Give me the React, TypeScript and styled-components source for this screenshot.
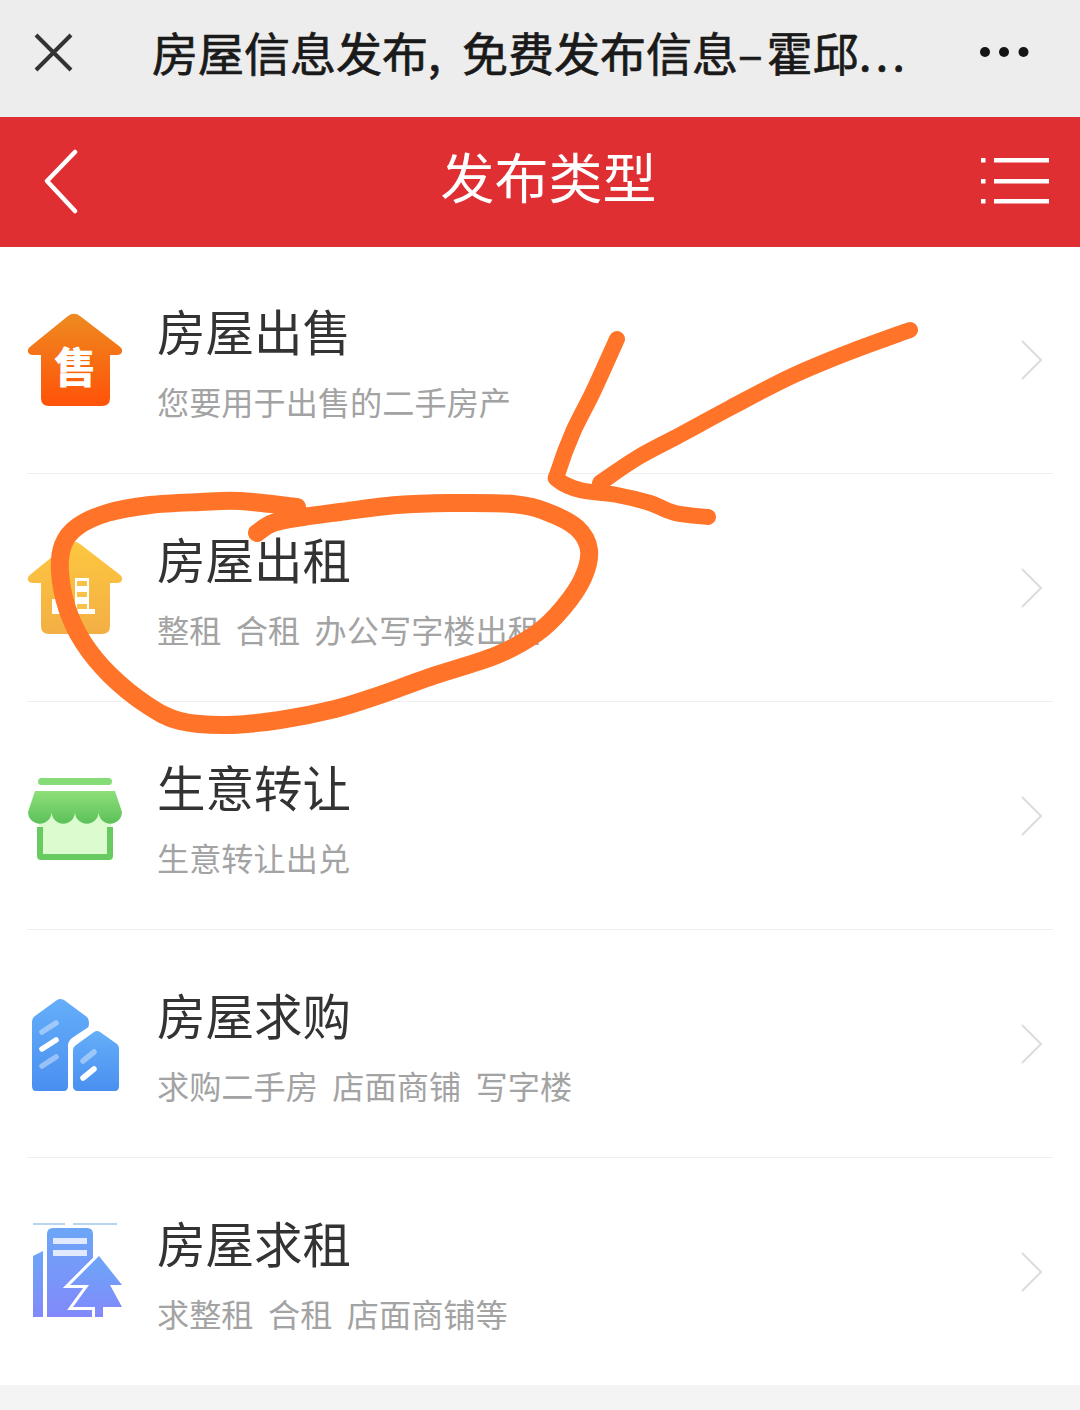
import React from 'react';
import styled, { createGlobalStyle } from 'styled-components';

const GlobalStyle = createGlobalStyle`
  html, body {
    margin: 0;
    padding: 0;
    background: #f4f4f4;
  }
  * {
    box-sizing: border-box;
  }
`;

const cjk = `"Noto Sans CJK SC", "Noto Sans", sans-serif`;

const Page = styled.div`
  position: relative;
  width: 1080px;
  height: 1410px;
  overflow: hidden;
  font-family: ${cjk};
`;

const BrowserBar = styled.header`
  display: flex;
  align-items: center;
  height: 117px;
  padding: 0 50px 0 33px;
  background: #ededed;
`;

const PageName = styled.h1`
  flex: 1;
  margin: 0 0 0 77px;
  padding-bottom: 15px;
  font-size: 46px;
  font-weight: 400;
  -webkit-text-stroke: 0.7px #1a1a1a;
  line-height: 60px;
  color: #1a1a1a;
  white-space: nowrap;
`;

const Spaced = styled.span<{ $gap: number }>`
  letter-spacing: ${(p) => p.$gap}px;
`;

const RedBar = styled.div`
  display: flex;
  align-items: center;
  justify-content: space-between;
  height: 130px;
  padding: 0 31px 0 44px;
  background: #df2f33;
`;

const BarTitle = styled.h2`
  margin: 0 0 12px 36px;
  font-size: 54px;
  font-weight: 400;
  line-height: 70px;
  color: #fff;
`;

const List = styled.ul`
  margin: 0;
  padding: 0 27px;
  list-style: none;
  background: #fff;
`;

const Row = styled.li`
  display: flex;
  align-items: center;
  height: 228px;
  border-bottom: 1px solid #efefef;

  &:first-child {
    height: 227px;
  }

  &:last-child {
    height: 227px;
    border-bottom: 0;
  }
`;

const IconBox = styled.div`
  position: relative;
  flex: none;
  width: 96px;
  height: 96px;
  margin: -2px 34px 0 0;

  svg {
    overflow: visible;
  }
`;

const IconMark = styled.span`
  position: absolute;
  left: 0;
  right: 0;
  top: 30px;
  font-size: 42px;
  font-weight: 900;
  line-height: 48px;
  text-align: center;
  color: #fff;
`;

const RowText = styled.div`
  flex: 1;
`;

const RowTitle = styled.div`
  font-size: 48.5px;
  line-height: 64px;
  color: #333;
`;

const RowSub = styled.div`
  margin-top: 18px;
  font-size: 32.2px;
  line-height: 42px;
  white-space: pre;
  color: #a3a3a3;
`;

const Chevron = styled.svg`
  flex: none;
  width: 24px;
  height: 42px;
  margin-right: 9px;
`;

const Scribble = styled.svg`
  position: absolute;
  left: 0;
  top: 0;
  pointer-events: none;
`;

const CloseIcon = () => (
  <svg width="42" height="42" viewBox="0 0 42 42" style={{ flex: 'none', marginBottom: 12 }}>
    <path d="M3 3 L38 38 M38 3 L3 38" stroke="#333" strokeWidth="4" fill="none" />
  </svg>
);

const MoreIcon = () => (
  <svg width="50" height="12" viewBox="0 0 50 12" style={{ flex: 'none', marginBottom: 13 }}>
    <circle cx="5" cy="6" r="5" fill="#151515" />
    <circle cx="24" cy="6" r="5" fill="#151515" />
    <circle cx="43.5" cy="6" r="5" fill="#151515" />
  </svg>
);

const BackIcon = () => (
  <svg width="36" height="66" viewBox="0 0 36 66" style={{ marginBottom: 1 }}>
    <path d="M31 3 L3 32 L31 62" stroke="#fff" strokeWidth="4.5" strokeLinecap="round" strokeLinejoin="round" fill="none" />
  </svg>
);

const MenuIcon = () => (
  <svg width="68" height="46" viewBox="0 0 68 46" style={{ marginBottom: 3 }}>
    <g fill="#fff">
      <rect x="0" y="0" width="4.5" height="4.5" />
      <rect x="13" y="0" width="55" height="4.5" />
      <rect x="0" y="21" width="4.5" height="4.5" />
      <rect x="13" y="21" width="55" height="4.5" />
      <rect x="0" y="41" width="4.5" height="4.5" />
      <rect x="13" y="41" width="55" height="4.5" />
    </g>
  </svg>
);

const housePath =
  'M41 5 Q47 0.5 53 5 L92 35 Q96 38 95 41 Q94 44 90 44 L83 44 L83 87 Q83 95 75 95 L22 95 Q14 95 14 87 L14 44 L6 44 Q2 44 1 41 Q0 38 4 35 Z';

const HouseIcon = ({ id, from, to, children }: { id: string; from: string; to: string; children?: React.ReactNode }) => (
  <>
    <svg width="96" height="96" viewBox="0 0 96 96">
      <defs>
        <linearGradient id={id} x1="0" y1="0" x2="0" y2="1">
          <stop offset="0" stopColor={from} />
          <stop offset="1" stopColor={to} />
        </linearGradient>
      </defs>
      <path d={housePath} fill={`url(#${id})`} />
      {id === 'rent' && (
        <g fill="#fff">
          <path d="M48 39 H62 V70 H68 V75 H48 Z" />
          <rect x="25" y="60" width="14" height="15" />
          <rect x="50" y="42" width="10" height="5" fill="#f9c146" />
          <rect x="50" y="53" width="10" height="5" fill="#f9c146" />
          <rect x="50" y="65" width="10" height="5" fill="#f9c146" />
        </g>
      )}
    </svg>
    {children}
  </>
);

const ShopIcon = () => (
  <svg width="96" height="96" viewBox="0 0 96 96">
    <defs>
      <linearGradient id="awning" x1="0" y1="0" x2="0" y2="1">
        <stop offset="0" stopColor="#8ee07a" />
        <stop offset="1" stopColor="#5cc05a" />
      </linearGradient>
    </defs>
    <rect x="11" y="11" width="74" height="7" rx="3.5" fill="#86dc77" />
    <path d="M12 40 H84 V90 H12 Z" fill="#dcfccf" />
    <path d="M10 60 V89 Q10 93 14 93 H82 Q86 93 86 89 V60 H80 V87 H16 V60 Z" fill="#67cb61" />
    <path
      d="M8 24 H88 L95 45 A11.7 11.7 0 0 1 71.6 45 A11.7 11.7 0 0 1 48 45 A11.7 11.7 0 0 1 24.6 45 A11.7 11.7 0 0 1 1 45 Z"
      fill="url(#awning)"
    />
  </svg>
);

const TowerIcon = () => (
  <svg width="96" height="96" viewBox="0 0 96 96">
    <defs>
      <linearGradient id="tower" x1="0" y1="0" x2="0" y2="1">
        <stop offset="0" stopColor="#64aef9" />
        <stop offset="1" stopColor="#4a8ff0" />
      </linearGradient>
    </defs>
    <g transform="translate(0 3)">
      <path
        d="M30 2 Q33 0 37 2 L60 19 Q62 21 62 26 Q62 29 60 30 L45 40 Q41 43 41 48 V88 Q41 93 37 93 H9 Q5 93 5 88 V23 Q5 20 8 18 Z"
        fill="url(#tower)"
      />
      <path
        d="M67 34 Q70 32 73 34 L90 46 Q92 48 92 50 V88 Q92 93 88 93 H51 Q46 93 46 88 V53 Q46 49 49 47 Z"
        fill="url(#tower)"
      />
    </g>
    <g strokeLinecap="round" strokeWidth="5.5" stroke="#fff">
      <path d="M15 37 L29 28" opacity="0.4" />
      <path d="M15 54 L29 45" />
      <path d="M15 71 L29 62" opacity="0.4" />
      <path d="M56 66 L67 57" opacity="0.4" />
      <path d="M56 83 L67 74" />
    </g>
  </svg>
);

const ParkIcon = () => (
  <svg width="96" height="96" viewBox="0 0 96 96">
    <defs>
      <linearGradient id="park" x1="0" y1="0" x2="0" y2="1">
        <stop offset="0" stopColor="#6ca6f7" />
        <stop offset="1" stopColor="#8289fb" />
      </linearGradient>
    </defs>
    <path d="M6 1 H38 M46 1 H90" stroke="#a3c6e8" strokeWidth="1.5" />
    <path d="M6 33 L16 28 V94 H6 Z" fill="url(#park)" />
    <path d="M20 11 Q20 5 26 5 H60 Q66 5 66 11 V94 H20 Z" fill="url(#park)" />
    <rect x="26" y="15" width="34" height="6" fill="#e0e9fd" />
    <rect x="26" y="27" width="34" height="6" fill="#e0e9fd" />
    <path
      d="M72 33 L95 62 H83 L95 84 H76 V94 H68 V84 H46 L62 62 H43 Z"
      fill="url(#park)"
      stroke="#fff"
      strokeWidth="6"
      strokeLinejoin="miter"
      paintOrder="stroke"
    />
  </svg>
);

// smooth curve through the traced points of a hand drawn stroke
const smooth = (pts: number[][]) => {
  let d = `M${pts[0][0]} ${pts[0][1]}`;
  for (let i = 0; i < pts.length - 1; i++) {
    const p0 = pts[i - 1] || pts[i];
    const p1 = pts[i];
    const p2 = pts[i + 1];
    const p3 = pts[i + 2] || p2;
    const c1 = [p1[0] + (p2[0] - p0[0]) / 6, p1[1] + (p2[1] - p0[1]) / 6];
    const c2 = [p2[0] - (p3[0] - p1[0]) / 6, p2[1] - (p3[1] - p1[1]) / 6];
    d += ` C${c1[0]} ${c1[1]} ${c2[0]} ${c2[1]} ${p2[0]} ${p2[1]}`;
  }
  return d;
};

const arrowShaft = [
  [910, 330], [847, 353], [790, 377], [730, 408], [680, 435], [637, 458], [600, 483],
];

const arrowHead = [
  [617, 339], [593, 392], [573, 432], [558, 472], [558, 480], [580, 490], [617, 495], [650, 503], [675, 513], [708, 517],
];

const ring = [
  [257, 533], [273, 523], [303, 517], [340, 512], [397, 505], [450, 503], [513, 504], [547, 512], [577, 528], [589, 550],
  [583, 578], [563, 608], [537, 633], [497, 655], [430, 677], [380, 695], [335, 709], [280, 720], [227, 725], [180, 721],
  [147, 705], [110, 675], [83, 642], [67, 608], [60, 572], [63, 545], [77, 527], [107, 513], [150, 505], [200, 502],
  [240, 501], [297, 507],
];

const rows = [
  {
    title: '房屋出售',
    sub: '您要用于出售的二手房产',
    icon: (
      <HouseIcon id="sale" from="#ee8a20" to="#ff5208">
        <IconMark>售</IconMark>
      </HouseIcon>
    ),
  },
  { title: '房屋出租', sub: '整租  合租  办公写字楼出租', icon: <HouseIcon id="rent" from="#fdc73f" to="#f3af45" /> },
  { title: '生意转让', sub: '生意转让出兑', icon: <ShopIcon /> },
  { title: '房屋求购', sub: '求购二手房  店面商铺  写字楼', icon: <TowerIcon /> },
  { title: '房屋求租', sub: '求整租  合租  店面商铺等', icon: <ParkIcon /> },
];

export default function App() {
  return (
    <Page>
      <GlobalStyle />
      <BrowserBar>
        <CloseIcon />
        <PageName>
          房屋信息发布<Spaced $gap={5}>,</Spaced>
          <Spaced $gap={6}> </Spaced>免费发布信息<Spaced $gap={4}>–</Spaced>霍邱<Spaced $gap={4}>...</Spaced>
        </PageName>
        <MoreIcon />
      </BrowserBar>
      <RedBar>
        <BackIcon />
        <BarTitle>发布类型</BarTitle>
        <MenuIcon />
      </RedBar>
      <List>
        {rows.map((r) => (
          <Row key={r.title}>
            <IconBox>{r.icon}</IconBox>
            <RowText>
              <RowTitle>{r.title}</RowTitle>
              <RowSub>{r.sub}</RowSub>
            </RowText>
            <Chevron viewBox="0 0 24 42">
              <path d="M2 2 L21 21 L2 40" stroke="#dcdcdc" strokeWidth="2" fill="none" />
            </Chevron>
          </Row>
        ))}
      </List>
      {/* hand drawn marks on top of the screenshot */}
      <Scribble width="1080" height="1410" viewBox="0 0 1080 1410" fill="none" stroke="#ff7428" strokeLinecap="round" strokeLinejoin="round">
        <path strokeWidth="16" d={smooth(arrowShaft)} />
        <path strokeWidth="16" d={smooth(arrowHead)} />
        <path strokeWidth="18" d={smooth(ring)} />
      </Scribble>
    </Page>
  );
}
